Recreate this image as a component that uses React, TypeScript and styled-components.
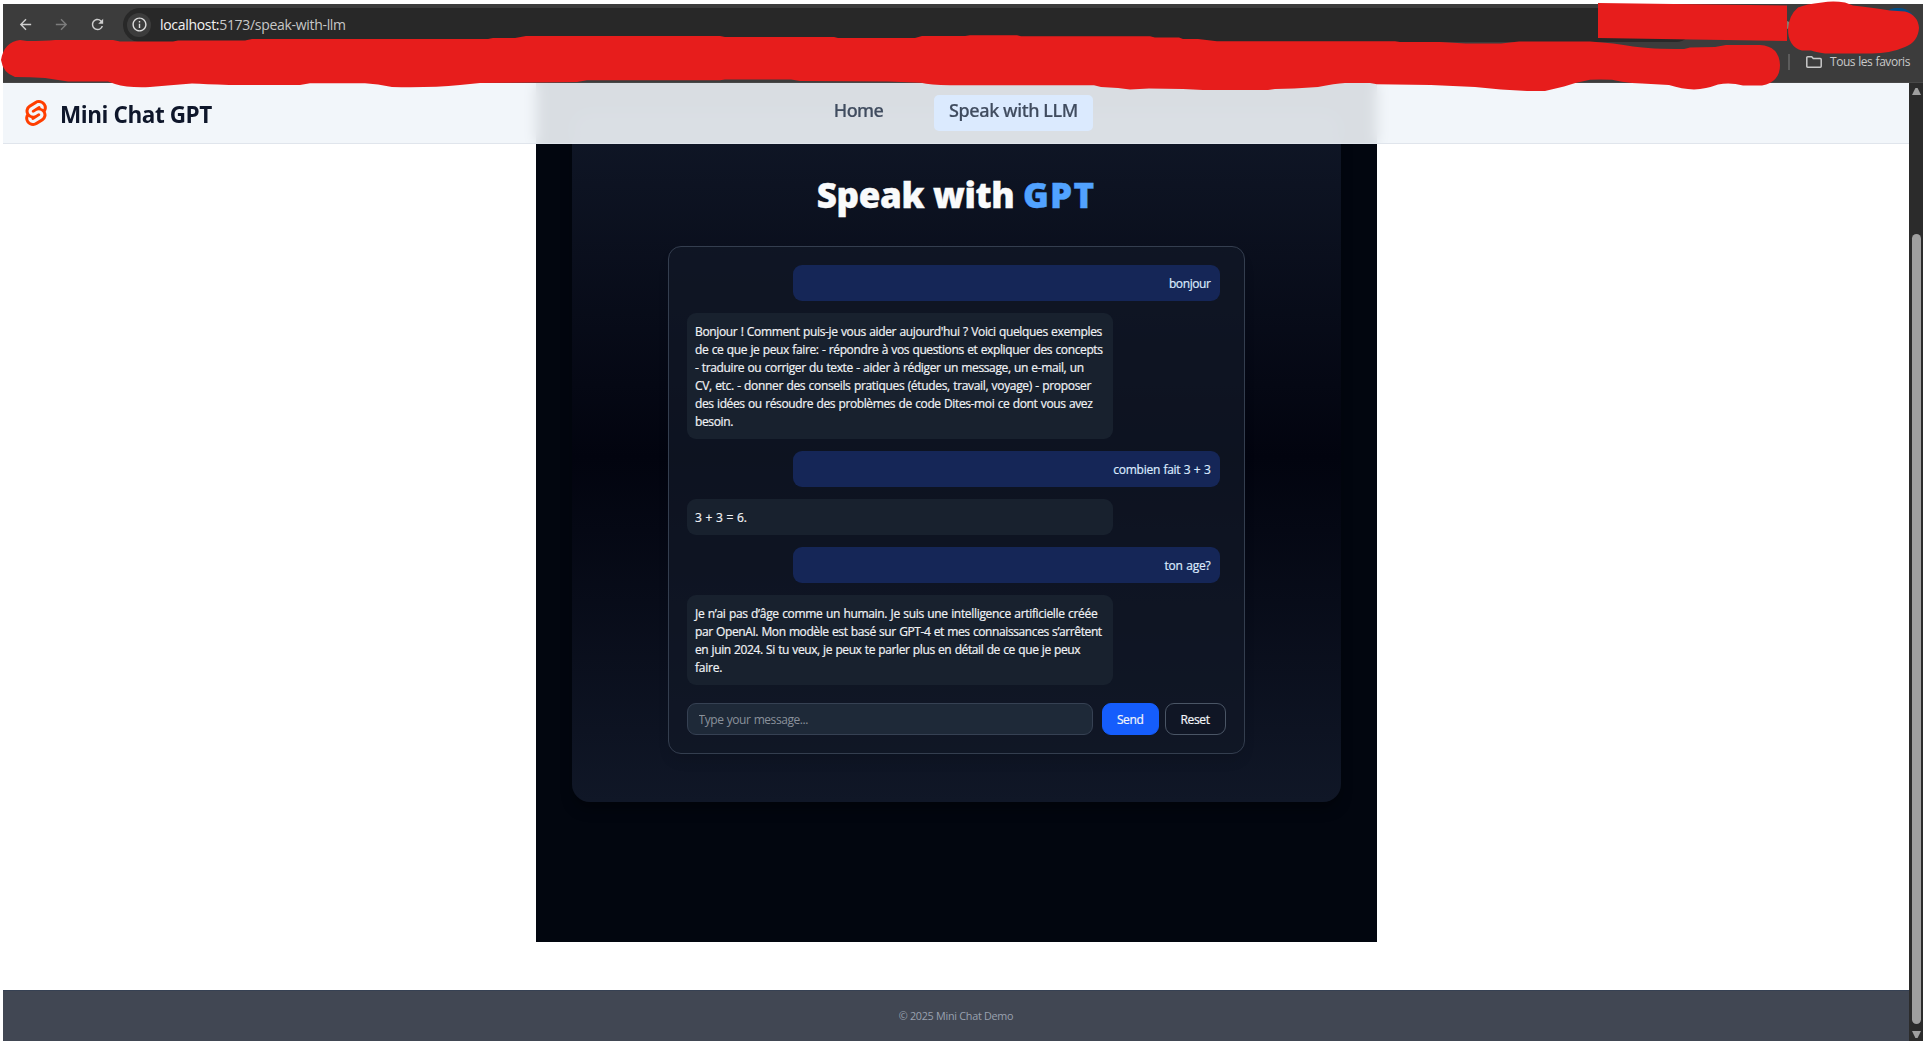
import React from 'react';
import styled, { createGlobalStyle } from 'styled-components';
import { SiSvelte } from 'react-icons/si';
import { MdArrowBack, MdArrowForward, MdRefresh, MdInfoOutline } from 'react-icons/md';

const GlobalStyle = createGlobalStyle`
  * { box-sizing: border-box; }
  body {
    margin: 0;
    background: #fff;
    font-family: 'Open Sans', 'Noto Sans', sans-serif;
  }
`;

const Window = styled.div`
  position: relative;
  width: 1923px;
  height: 1041px;
  padding: 4px 0 0 3px;
  display: flex;
  flex-direction: column;
  overflow: hidden;
`;

/* ---------- browser chrome ---------- */

const Chrome = styled.div`
  height: 79px;
  flex: none;
  display: flex;
  flex-direction: column;
  background: #3c3c3c;
  border-bottom: 1px solid #484848;
`;

const AddressRow = styled.div`
  display: flex;
  align-items: center;
  height: 41px;
  padding-left: 13px;
`;

const NavIcon = styled.span<{ $dim?: boolean }>`
  display: flex;
  justify-content: center;
  width: 18px;
  margin-right: 18px;
  font-size: 17px;
  color: ${(p) => (p.$dim ? '#7c7c7c' : '#cfcfcf')};
`;

const AddressBar = styled.div`
  display: flex;
  align-items: center;
  width: 1570px;
  height: 34px;
  margin-left: -1px;
  padding-left: 4px;
  border-radius: 17px;
  background: #282828;
`;

const InfoBadge = styled.span`
  display: flex;
  align-items: center;
  justify-content: center;
  width: 24px;
  height: 24px;
  border-radius: 50%;
  background: #3c3c3c;
  color: #dedede;
  font-size: 17px;
`;

const Url = styled.span`
  margin-left: 9px;
  padding-top: 1px;
  font-size: 14px;
  line-height: 20px;
  letter-spacing: -0.31px;
  color: #c7c7c7;
  white-space: nowrap;
`;

const UrlHost = styled.span`
  color: #f2f2f2;
`;

const Avatar = styled.span`
  width: 36px;
  height: 34px;
  margin-left: 187px;
  border-radius: 17px;
  background: #004e87;
`;

const BookmarksRow = styled.div`
  display: flex;
  align-items: center;
  justify-content: flex-end;
  height: 34px;
  padding-right: 13px;
`;

const Divider = styled.span`
  width: 2px;
  height: 16px;
  margin-right: 16px;
  background: #5c5c5c;
`;

const BookmarksLabel = styled.span`
  width: 80px;
  margin-left: 8px;
  padding-bottom: 1px;
  font-size: 12px;
  letter-spacing: -0.47px;
  word-spacing: 0.6px;
  color: #c9c9c9;
  white-space: nowrap;
`;

const Redaction = styled.svg`
  position: absolute;
  left: 0;
  top: 0;
  z-index: 10;
  pointer-events: none;
`;

/* ---------- page ---------- */

const Viewport = styled.div`
  flex: 1;
  display: flex;
  min-height: 0;
`;

const Page = styled.div`
  flex: 1;
  display: flex;
  flex-direction: column;
  background: #fff;
  overflow: hidden;
`;

const Header = styled.header`
  position: relative;
  z-index: 2;
  display: grid;
  grid-template-columns: 1fr auto 1fr;
  align-items: center;
  flex: none;
  height: 61px;
  padding: 0 22px;
  background: rgba(241, 245, 249, 0.9);
  backdrop-filter: blur(7px);
  border-bottom: 1px solid #e0e5ec;
`;

const Brand = styled.div`
  display: flex;
  align-items: center;
  gap: 13px;
  color: #0f172b;
  font-size: 22.5px;
  font-weight: 700;
  letter-spacing: -0.42px;
`;

const BrandName = styled.span`
  padding-top: 2px;
`;

const BrandMark = styled(SiSvelte)`
  width: 26px;
  height: 26px;
  margin: 0 -2px;
  color: #ff3e00;
`;

const Nav = styled.nav`
  display: flex;
  gap: 36px;
`;

const NavLink = styled.a<{ $active?: boolean; $width: number; $track: number }>`
  display: flex;
  justify-content: center;
  width: ${(p) => p.$width}px;
  height: 36px;
  border-radius: 5px;
  background: ${(p) => (p.$active ? '#dbeafe' : 'transparent')};
  color: #404c5f;
  font-family: 'Noto Sans', 'Open Sans', sans-serif;
  font-size: 18px;
  font-weight: 500;
  line-height: 31px;
  letter-spacing: ${(p) => p.$track}px;
  -webkit-text-stroke: 0.2px currentColor;
  white-space: nowrap;
`;

const Main = styled.main`
  flex: none;
  align-self: center;
  width: 841px;
  height: 859px;
  margin-top: -61px;
  padding: 29px 36px 140px;
  background: #02060f;
`;

const Card = styled.section`
  display: flex;
  flex-direction: column;
  align-items: center;
  height: 690px;
  padding-top: 58px;
  border-radius: 18px;
  background: linear-gradient(#101727, #02040f 50%, #101727);
  box-shadow: 0 9px 14px -3px rgba(0, 0, 0, 0.4);
`;

const Title = styled.h1`
  margin: 0 0 27px;
  color: #f9fafb;
  font-size: 35px;
  font-weight: 800;
  line-height: 49px;
  letter-spacing: -0.35px;
  white-space: nowrap;
  -webkit-text-stroke: 0.4px currentColor;
`;

const Accent = styled.span`
  color: #51a2ff;
  letter-spacing: 1.2px;
`;

const ChatPanel = styled.div`
  width: 577px;
  height: 508px;
  padding: 18px;
  border: 1px solid #343e4f;
  border-radius: 13px;
  background: rgba(17, 24, 39, 0.75);
  box-shadow: 0 9px 14px -3px rgba(0, 0, 0, 0.1);
`;

const Messages = styled.div`
  display: flex;
  flex-direction: column;
  gap: 12px;
  padding-right: 6px;
`;

const Bubble = styled.div<{ $user?: boolean }>`
  align-self: ${(p) => (p.$user ? 'flex-end' : 'flex-start')};
  width: ${(p) => (p.$user ? 427 : 426)}px;
  padding: 10px 9px 8px 8.5px;
  border-radius: 9px;
  background: ${(p) => (p.$user ? '#152657' : '#18212e')};
  color: ${(p) => (p.$user ? '#dbeafe' : '#f0f2f5')};
  text-align: ${(p) => (p.$user ? 'right' : 'left')};
`;

const Line = styled.div<{ $track: number }>`
  height: 18px;
  font-size: 12px;
  line-height: 18px;
  letter-spacing: ${(p) => p.$track}px;
  word-spacing: 0.6px;
  -webkit-text-stroke: 0.2px currentColor;
  white-space: nowrap;
`;

const Composer = styled.form`
  display: flex;
  margin-top: 18px;
`;

const MessageInput = styled.input`
  width: 407px;
  height: 32px;
  margin-right: 9px;
  padding: 0 11px;
  border: 1px solid #364153;
  border-radius: 9px;
  background: #1e2938;
  font-family: inherit;
  font-size: 12px;
  letter-spacing: -0.43px;
  word-spacing: 0.5px;
  &::placeholder { color: #8a919b; }
`;

const Button = styled.button<{ $primary?: boolean }>`
  width: ${(p) => (p.$primary ? 57 : 61)}px;
  height: 32px;
  margin-right: ${(p) => (p.$primary ? 6 : 0)}px;
  padding: 0;
  border: 1px solid ${(p) => (p.$primary ? '#155dfc' : '#4a5565')};
  border-radius: 9px;
  background: ${(p) => (p.$primary ? '#155dfc' : 'transparent')};
  color: #f3f5f9;
  font-family: inherit;
  font-size: 12px;
  letter-spacing: -0.37px;
  -webkit-text-stroke: 0.2px currentColor;
`;

const Footer = styled.footer`
  display: flex;
  align-items: center;
  justify-content: center;
  flex: none;
  height: 51px;
  margin-top: auto;
  padding-bottom: 2px;
  background: #414753;
  border-top: 1px solid #364153;
  color: #99a1af;
  font-size: 10.8px;
  letter-spacing: -0.27px;
`;

const Scrollbar = styled.div`
  display: flex;
  flex-direction: column;
  align-items: center;
  width: 14px;
  padding: 5px 0 3px 1px;
  background: #2b2b2b;
`;

const ScrollArrow = styled.span<{ $down?: boolean }>`
  width: 9px;
  height: 7px;
  background: #9f9f9f;
  clip-path: ${(p) =>
    p.$down
      ? 'polygon(0 0, 100% 0, 62% 100%, 38% 100%)'
      : 'polygon(38% 0, 62% 0, 100% 100%, 0 100%)'};
`;

const Thumb = styled.span`
  width: 9px;
  height: 790px;
  margin: 139px 0 7px;
  border-radius: 5px;
  background: #9f9f9f;
`;

type Message = { user?: boolean; lines: [string, number][] };

const messages: Message[] = [
  { user: true, lines: [['bonjour', -0.41]] },
  {
    lines: [
      ["Bonjour ! Comment puis-je vous aider aujourd'hui ? Voici quelques exemples", -0.36],
      ['de ce que je peux faire: - répondre à vos questions et expliquer des concepts', -0.376],
      ['- traduire ou corriger du texte - aider à rédiger un message, un e-mail, un', -0.365],
      ['CV, etc. - donner des conseils pratiques (études, travail, voyage) - proposer', -0.332],
      ['des idées ou résoudre des problèmes de code Dites-moi ce dont vous avez', -0.378],
      ['besoin.', -0.37],
    ],
  },
  { user: true, lines: [['combien fait 3 + 3', -0.27]] },
  { lines: [['3 + 3 = 6.', -0.05]] },
  { user: true, lines: [['ton age?', -0.21]] },
  {
    lines: [
      ['Je n’ai pas d’âge comme un humain. Je suis une intelligence artificielle créée', -0.32],
      ['par OpenAI. Mon modèle est basé sur GPT-4 et mes connaissances s’arrêtent', -0.4],
      ['en juin 2024. Si tu veux, je peux te parler plus en détail de ce que je peux', -0.4],
      ['faire.', -0.25],
    ],
  },
];

export default function App() {
  return (
    <Window>
      <GlobalStyle />
      <Chrome>
        <AddressRow>
          <NavIcon><MdArrowBack /></NavIcon>
          <NavIcon $dim><MdArrowForward /></NavIcon>
          <NavIcon><MdRefresh /></NavIcon>
          <AddressBar>
            <InfoBadge><MdInfoOutline /></InfoBadge>
            <Url><UrlHost>localhost:</UrlHost>5173/speak-with-llm</Url>
          </AddressBar>
          <Avatar />
        </AddressRow>
        <BookmarksRow>
          <Divider />
          <svg width="16" height="12" viewBox="0 0 16 12" fill="none" stroke="#c9c9c9" strokeWidth="1.5">
            <path d="M.8 10.3V1.7q0-.9.9-.9h4l1.6 1.8h7q.9 0 .9.9v6.8q0 .9-.9.9H1.700q-.9 0-.9-.9Z" />
          </svg>
          <BookmarksLabel>Tous les favoris</BookmarksLabel>
        </BookmarksRow>
      </Chrome>

      <Viewport>
        <Page>
          <Header>
            <Brand><BrandMark /><BrandName>Mini Chat GPT</BrandName></Brand>
            <Nav>
              <NavLink $width={79} $track={-0.6}>Home</NavLink>
              <NavLink $active $width={159} $track={-0.4}>Speak with LLM</NavLink>
            </Nav>
          </Header>
          <Main>
            <Card>
              <Title>Speak with <Accent>GPT</Accent></Title>
              <ChatPanel>
                <Messages>
                  {messages.map((m, i) => (
                    <Bubble key={i} $user={m.user}>
                      {m.lines.map(([text, track]) => (
                        <Line key={text} $track={track}>{text}</Line>
                      ))}
                    </Bubble>
                  ))}
                </Messages>
                <Composer>
                  <MessageInput placeholder="Type your message..." />
                  <Button $primary type="button">Send</Button>
                  <Button type="button">Reset</Button>
                </Composer>
              </ChatPanel>
            </Card>
          </Main>
          <Footer>© 2025 Mini Chat Demo</Footer>
        </Page>
        <Scrollbar>
          <ScrollArrow />
          <Thumb />
          <ScrollArrow $down />
        </Scrollbar>
      </Viewport>

      <Redaction width="1923" height="100" viewBox="0 0 1923 100" fill="#e71d1c">
        <circle cx="1786" cy="25" r="4" fill="#8a7d70" />
        <path d="M1598 3 1787 5.500V41L1598 38Z" />
        <path d="M1788 29Q1789 15 1798 7.500Q1806 4 1822 2.500Q1833 .5 1845 2.500L1853 5.500Q1875 8 1890 10.500L1905 11.500Q1918 15 1919 28Q1918 42 1905 47Q1890 53.500 1872 53.500H1825Q1815 52 1811 50.500H1802Q1788 47 1788 29Z" />
        <path d="M1 60Q4 42 20 40L27 41Q45 41 55 40H113L120 41.500H173L178 40.500H245L252 39H488L493 38H515L526 36H720L725 37H834L838 38H915L922 36H965L970 35.300H1017L1021 36.200H1150L1155 37.500H1179L1183 39H1198L1217 41.200H1395L1400 42H1440L1466 43.500H1501L1519 41.500H1590Q1615 43 1633 46.500Q1650 49 1684 49L1690 47.500L1715 47L1726 45H1760Q1779 46 1780 65Q1780 82 1762 85.500H1743Q1730 82 1718 84.500Q1706 89 1694 89.500Q1682 89 1669 85L1642 83.500L1632 83Q1622 82 1612 79.800Q1600 79 1590 79.800Q1578 82 1564 86.500L1545 91H1527L1501 89.500L1475 87L1431 85L1377 84.300L1370 83H1345Q1335 83.500 1318 87L1294 88.500L1275 89L1268 90H1203L1183 89L1149 88.500L1130 89.500L1118 88L1101 87L1094 85.300H950Q930 85 921 82.700L888 81.500L800 81L791 79.500H725L720 80.300H587L577 82L480 83L460 85Q430 88 392 87L378 84.500L365 83.200H310L300 85H229Q205 84 192 83.500Q170 85 150 87Q128 88 115 84L108 81.500H68L45 78Q30 77 15 77Q3 73 1 60Z" />
      </Redaction>
    </Window>
  );
}
